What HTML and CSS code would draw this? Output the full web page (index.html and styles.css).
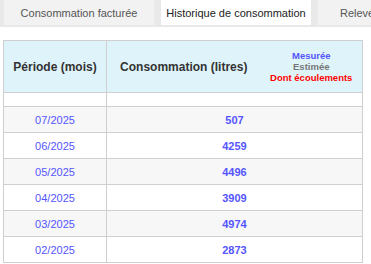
FILE: index.html
```html
<!DOCTYPE html>
<html lang="fr">
<head>
<meta charset="utf-8">
<link rel="stylesheet" href="styles.css">
</head>
<body>
<div class="tabs">
  <div class="tab">Consommation facturée</div>
  <div class="tab active">Historique de consommation</div>
  <div class="tab">Releves</div>
</div>
<table class="conso">
  <colgroup>
    <col class="c1">
    <col class="c2">
    <col class="c3">
  </colgroup>
  <thead>
    <tr class="head">
      <th class="h-period">Période (mois)</th>
      <th class="h-conso">Consommation (litres)</th>
      <th class="h-legend">
        <span class="lg lg-m">Mesurée</span>
        <span class="lg lg-e">Estimée</span>
        <span class="lg lg-d">Dont écoulements</span>
      </th>
    </tr>
  </thead>
  <tbody>
    <tr class="spacer"><td></td><td colspan="2"></td></tr>
    <tr class="alt"><td class="per">07/2025</td><td class="val" colspan="2">507</td></tr>
    <tr><td class="per">06/2025</td><td class="val" colspan="2">4259</td></tr>
    <tr class="alt"><td class="per">05/2025</td><td class="val" colspan="2">4496</td></tr>
    <tr><td class="per">04/2025</td><td class="val" colspan="2">3909</td></tr>
    <tr class="alt"><td class="per">03/2025</td><td class="val" colspan="2">4974</td></tr>
    <tr><td class="per">02/2025</td><td class="val" colspan="2">2873</td></tr>
  </tbody>
</table>
</body>
</html>
```
FILE: styles.css
```css
html, body {
  margin: 0;
  padding: 0;
  background: #ffffff;
  font-family: "Liberation Sans", Arial, sans-serif;
  overflow: hidden;
}

.tabs {
  display: flex;
  gap: 7px;
  height: 25px;
  padding: 0 0 2px 4px;
  background: #e9e9e9;
  overflow: hidden;
  white-space: nowrap;
}

.tab {
  flex: 0 0 150px;
  height: 25px;
  line-height: 26px;
  text-align: center;
  font-size: 11px;
  color: #555555;
  background: #f2f2f2;
}

.tab.active {
  background: #ffffff;
  color: #222222;
}

.tab:last-child {
  text-align: left;
  padding-left: 22px;
}

.conso {
  margin: 13px 0 0 3px;
  width: 360px;
  border-collapse: collapse;
  border: 1px solid #cfcfcf;
  table-layout: fixed;
}

.c1 { width: 103px; }
.c3 { width: 102px; }

.conso td, .conso th {
  padding: 0;
  text-align: center;
}

.head th {
  height: 51px;
  background: #dff4fa;
  border-bottom: 1px solid #cfcfcf;
  font-size: 12px;
  font-weight: bold;
  color: #333333;
}

.h-period {
  border-right: 1px solid #cfcfcf;
}

.h-legend {
  vertical-align: middle;
}

.lg {
  display: block;
  font-size: 9.5px;
  line-height: 11px;
  font-weight: bold;
}

.lg-m { color: #5555ff; }
.lg-e { color: #777777; }
.lg-d { color: #ff0000; }

.conso tbody td {
  border: 1px solid #cfcfcf;
  height: 25px;
  font-size: 11px;
  color: #5555ff;
}

.conso tbody tr.spacer td {
  height: 13px;
}

.conso tbody tr.alt td {
  background: #f7f7f7;
}

.val {
  font-weight: bold;
}
```
